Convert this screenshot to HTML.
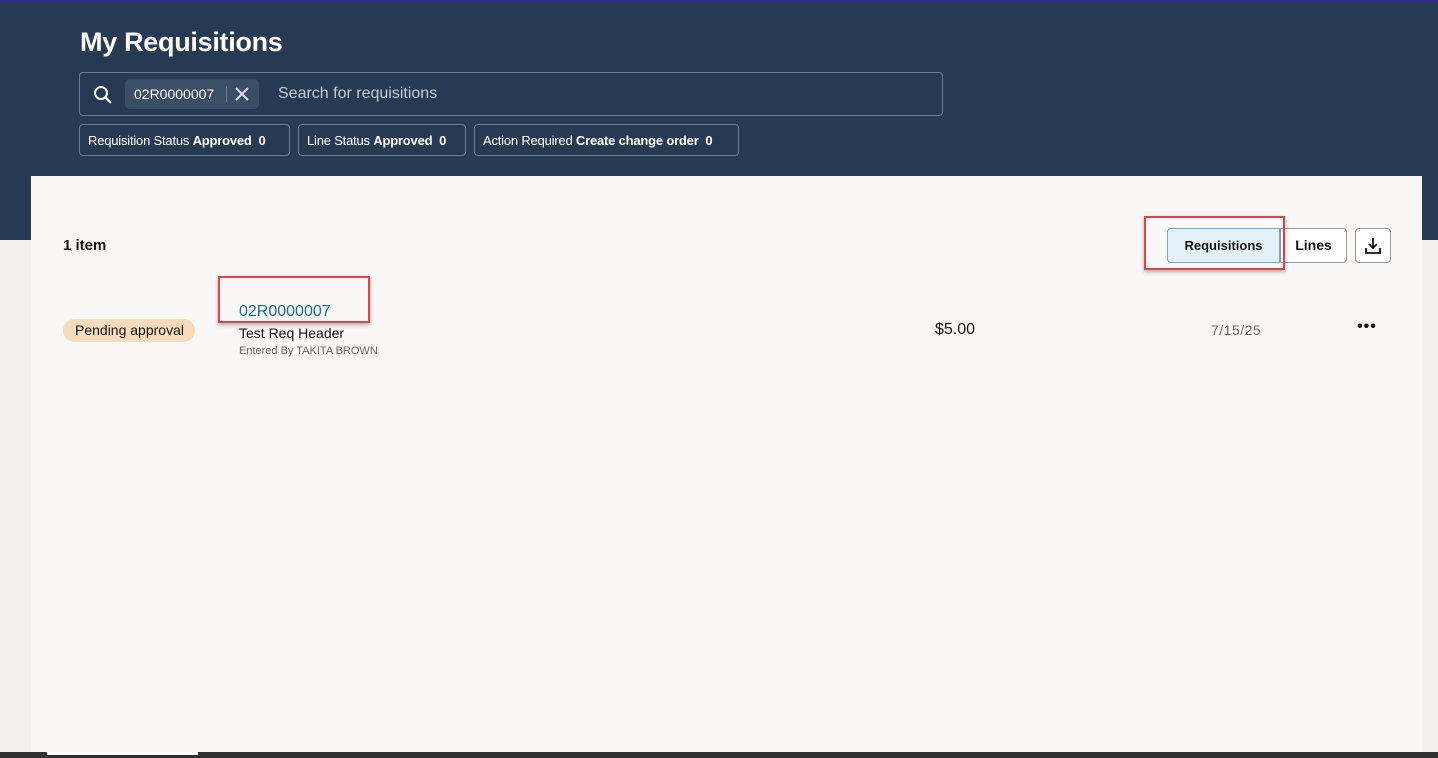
<!DOCTYPE html>
<html><head><style>
*{box-sizing:border-box;margin:0;padding:0}
body{width:1438px;height:758px;overflow:hidden;background:#f1f0ee;font-family:"Liberation Sans",sans-serif;position:relative}
.hdr{position:absolute;left:0;top:0;width:1438px;height:240px;background:#263b53}
.hdr:before{content:"";position:absolute;left:0;top:0;width:100%;height:3px;background:#2f2d7e}
h1{position:absolute;left:80px;top:27px;color:#fff;font-size:27px;font-weight:bold;letter-spacing:-0.3px}
.search{position:absolute;left:79px;top:72px;width:864px;height:44px;border:1px solid #6b7d90;border-radius:4px}
.chip{position:absolute;left:45px;top:6px;width:134px;height:30px;background:#3a4e65;border-radius:5px;color:#fff;font-size:14px;padding:7px 9px}
.chip .sep{position:absolute;left:101px;top:7px;width:1px;height:16px;background:#6b7d90}
.ph{position:absolute;left:198px;top:12px;color:#c4ccd5;font-size:16px}
.f{position:absolute;top:124px;height:32px;border:1px solid #6b7d90;border-radius:4px;color:#fff;font-size:13px;padding:8px 8px;white-space:nowrap;letter-spacing:-0.2px}
.f b{font-weight:bold}
.card{position:absolute;left:31px;top:176px;width:1391px;height:576px;background:#f9f8f6}
.bot{position:absolute;left:0;top:752px;width:1438px;height:6px;background:#323232}
.bot i{position:absolute;left:47px;top:0;width:151px;height:3px;background:#fff}
.t{position:absolute;white-space:nowrap}
.red{position:absolute;border:2px solid #e0444a;box-shadow:0 2px 4px rgba(0,0,0,.3)}
.btn{position:absolute;top:228px;height:35px;border:1px solid #999;font-size:14px;font-weight:bold;color:#161513;text-align:center;line-height:33px}
</style></head><body>
<div class="hdr">
<h1>My Requisitions</h1>
<div class="search">
<svg style="position:absolute;left:13px;top:12px" width="20" height="20" viewBox="0 0 20 20"><circle cx="8" cy="8" r="6" fill="none" stroke="#fff" stroke-width="2"/><path d="M12.5 12.5L18 18" stroke="#fff" stroke-width="2.2"/></svg>
<div class="chip">02R0000007<span class="sep"></span>
<svg style="position:absolute;left:110px;top:8px" width="14" height="14" viewBox="0 0 14 14"><path d="M1 1L13 13M13 1L1 13" stroke="#dde" stroke-width="2"/></svg></div>
<div class="ph">Search for requisitions</div>
</div>
<div class="f" style="left:79px;width:211px">Requisition Status <b>Approved</b>&nbsp; <b>0</b></div>
<div class="f" style="left:298px;width:168px">Line Status <b>Approved</b>&nbsp; <b>0</b></div>
<div class="f" style="left:474px;width:265px">Action Required <b>Create change order</b>&nbsp; <b>0</b></div>
</div>
<div class="card"></div>
<div class="t" style="left:63px;top:237px;font-size:15px;font-weight:bold;color:#161513">1 item</div>
<div class="btn" style="left:1167px;width:113px;background:#e4f0f8;border-color:#7aa7c4;border-radius:4px 0 0 4px;font-size:13px">Requisitions</div>
<div class="btn" style="left:1280px;width:67px;background:#fff;border-radius:0 4px 4px 0">Lines</div>
<div class="btn" style="left:1355px;width:36px;background:#fff;border-radius:4px">
<svg style="margin-top:8px" width="18" height="18" viewBox="0 0 18 18"><path d="M9 1V11M5 7L9 11L13 7M2 11V16H16V11" fill="none" stroke="#161513" stroke-width="1.8"/></svg></div>
<div class="red" style="left:1144px;top:216px;width:141px;height:54px"></div>
<div class="t" style="left:63px;top:319px;height:23px;width:132px;background:#f6dcbd;border-radius:12px;font-size:14px;color:#161513;padding:3px 12px">Pending approval</div>
<div class="t" style="left:239px;top:303px;font-size:16px;color:#1b6d8f">02R0000007</div>
<div class="red" style="left:218px;top:276px;width:152px;height:47px"></div>
<div class="t" style="left:239px;top:325px;font-size:14px;color:#161513">Test Req Header</div>
<div class="t" style="left:239px;top:345px;font-size:11px;color:#6b6865">Entered By TAKITA BROWN</div>
<div class="t" style="left:935px;top:321px;font-size:16px;color:#161513">$5.00</div>
<div class="t" style="left:1211px;top:322px;font-size:14px;color:#6b6865;letter-spacing:0.5px">7/15/25</div>
<div class="t" style="left:1357px;top:318px;font-size:16px;font-weight:bold;color:#161513;letter-spacing:1px">•••</div>
<div class="bot"><i></i></div>
</body></html>
